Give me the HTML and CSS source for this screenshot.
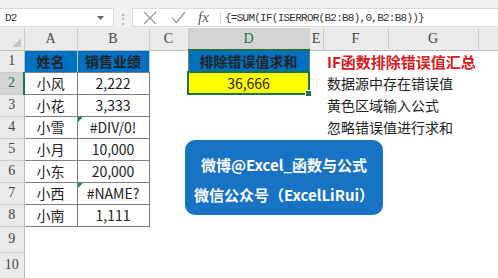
FILE: index.html
```html
<!DOCTYPE html>
<html lang="zh-CN">
<head>
    <meta charset="UTF-8">
    <title>IF函数排除错误值汇总</title>
    <link rel="stylesheet" href="styles.css">
</head>
<body>

    <div class="toolbar">
        <div class="name-box">
            <span>D2</span>
            <svg class="drop" width="7" height="4" viewBox="0 0 7 4"><path d="M0 0h7L3.5 4z" fill="#666"/></svg>
        </div>
        <div class="dots">⋮</div>
        <div class="formula-bar">
            <svg class="icon" width="14" height="14" viewBox="0 0 14 14"><path d="M1 1l12 12M13 1L1 13" stroke="#9a9a9a" stroke-width="1.3" fill="none"/></svg>
            <svg class="icon" width="15" height="13" viewBox="0 0 15 13"><path d="M1 7l4.5 4.5L14 1" stroke="#9a9a9a" stroke-width="1.3" fill="none"/></svg>
            <span class="fx">fx</span>
            <span class="formula">{=SUM(IF(ISERROR(B2:B8),0,B2:B8))}</span>
        </div>
    </div>

    <table class="sheet">
        <colgroup>
            <col class="c-row">
            <col class="c-a">
            <col class="c-b">
            <col class="c-c">
            <col class="c-d">
            <col class="c-e">
            <col class="c-f">
            <col class="c-g">
            <col class="c-h">
        </colgroup>
        <tr class="col-heads">
            <th class="corner"><span class="corner-tri"></span></th>
            <th>A</th><th>B</th><th>C</th><th class="sel">D</th><th>E</th><th>F</th><th>G</th><th></th>
        </tr>
        <tr>
            <th class="rh">1</th>
            <td class="head">姓名</td><td class="head">销售业绩</td><td></td>
            <td class="head sum-head">排除错误值求和</td><td></td>
            <td class="note title">IF函数排除错误值汇总</td><td></td><td></td>
        </tr>
        <tr>
            <th class="rh sel">2</th>
            <td class="cell">小风</td><td class="cell">2,222</td><td></td>
            <td class="result">36,666<span class="handle"></span></td><td></td>
            <td class="note">数据源中存在错误值</td><td></td><td></td>
        </tr>
        <tr>
            <th class="rh">3</th>
            <td class="cell">小花</td><td class="cell">3,333</td><td></td><td></td><td></td>
            <td class="note">黄色区域输入公式</td><td></td><td></td>
        </tr>
        <tr>
            <th class="rh">4</th>
            <td class="cell">小雪</td><td class="cell err">#DIV/0!</td><td></td><td></td><td></td>
            <td class="note">忽略错误值进行求和</td><td></td><td></td>
        </tr>
        <tr>
            <th class="rh">5</th>
            <td class="cell">小月</td><td class="cell">10,000</td><td></td><td></td><td></td><td></td><td></td><td></td>
        </tr>
        <tr>
            <th class="rh">6</th>
            <td class="cell">小东</td><td class="cell">20,000</td><td></td><td></td><td></td><td></td><td></td><td></td>
        </tr>
        <tr>
            <th class="rh">7</th>
            <td class="cell">小西</td><td class="cell err">#NAME?</td><td></td><td></td><td></td><td></td><td></td><td></td>
        </tr>
        <tr>
            <th class="rh">8</th>
            <td class="cell">小南</td><td class="cell">1,111</td><td></td><td></td><td></td><td></td><td></td><td></td>
        </tr>
        <tr class="tall">
            <th class="rh">9</th>
            <td></td><td></td><td></td><td></td><td></td><td></td><td></td><td></td>
        </tr>
        <tr class="tall">
            <th class="rh">10</th>
            <td></td><td></td><td></td><td></td><td></td><td></td><td></td><td></td>
        </tr>
    </table>

    <div class="banner">
        <p>微博@Excel_函数与公式</p>
        <p>微信公众号（ExcelLiRui）</p>
    </div>

</body>
</html>
```

FILE: styles.css
```css
body {
    margin: 0;
    width: 498px;
    height: 278px;
    overflow: hidden;
    background: white;
    font-family: "Noto Sans CJK SC", "Noto Sans", sans-serif;
    position: relative;
}

/* formula bar */
.toolbar {
    height: 28px;
    background-color: #f1f1f1;
    display: flex;
    align-items: flex-end;
    padding-bottom: 1px;
    box-sizing: border-box;
}

.name-box {
    width: 114px;
    height: 19px;
    background: white;
    border: 1px solid #dadada;
    border-left: none;
    box-sizing: border-box;
    display: flex;
    align-items: center;
    justify-content: space-between;
    padding: 0 9px 0 5px;
    font-family: "Liberation Mono", monospace;
    font-size: 11px;
    letter-spacing: -0.8px;
    color: #333;
}

.dots {
    width: 18px;
    text-align: center;
    color: #999;
    font-size: 12px;
    line-height: 19px;
}

.formula-bar {
    flex: 1;
    height: 19px;
    background: white;
    border: 1px solid #dadada;
    border-right: none;
    box-sizing: border-box;
    display: flex;
    align-items: center;
    padding-left: 10px;
    gap: 14px;
}

.fx {
    font-family: "Liberation Serif", serif;
    font-style: italic;
    font-size: 15px;
    color: #555;
    width: 14px;
    margin-left: -2px;
}

.formula {
    border-left: 1px solid #dadada;
    padding-left: 4px;
    margin-left: -6px;
    font-family: "Liberation Mono", monospace;
    font-size: 11px;
    letter-spacing: -0.75px;
    color: #333;
}

/* grid */
.sheet {
    border-collapse: collapse;
    table-layout: fixed;
    width: 520px;
}

.c-row { width: 24px; }
.c-a { width: 53px; }
.c-b { width: 72px; }
.c-c { width: 39px; }
.c-d { width: 121px; }
.c-e { width: 14px; }
.c-f { width: 65px; }
.c-g { width: 90px; }
.c-h { width: 42px; }

.sheet tr {
    height: 22px;
}

.sheet tr.tall {
    height: 26px;
}

.sheet td {
    padding: 0;
    white-space: nowrap;
    font-size: 14px;
    color: #222;
}

.col-heads th {
    background-color: #ebebeb;
    border-right: 1px solid #cdcdcd;
    border-bottom: 1px solid #bdbdbd;
    font-family: "Liberation Serif", serif;
    font-weight: normal;
    font-size: 14px;
    color: #444;
    padding: 0;
}

.col-heads th.sel {
    background-color: #d4d4d4;
    color: #217346;
    border-bottom: 2px solid #217346;
}

.corner {
    position: relative;
}

.corner-tri {
    position: absolute;
    right: 3px;
    bottom: 3px;
    border-left: 9px solid transparent;
    border-bottom: 9px solid #c5c5c5;
}

.rh {
    background-color: #ebebeb;
    border-right: 1px solid #bdbdbd;
    border-bottom: 1px solid #cdcdcd;
    font-family: "Liberation Serif", serif;
    font-weight: normal;
    font-size: 14px;
    color: #444;
    padding: 0;
}

.rh.sel {
    background-color: #d4d4d4;
    color: #217346;
    border-right: 2px solid #217346;
}

.head {
    background-color: #0070c0;
    color: white;
    font-weight: bold;
    font-size: 15px;
    text-align: center;
    border: 1px solid #7f7f7f;
    border-right-color: #c9c9c9;
}

.sum-head {
    border-right-color: #7f7f7f;
}

.cell {
    text-align: center;
    border: 1px solid #7f7f7f;
    position: relative;
}

.err::before {
    content: "";
    position: absolute;
    left: 0;
    top: 0;
    border-top: 5px solid #1f8a3c;
    border-right: 5px solid transparent;
}

.result {
    background-color: #ffff00;
    border: 2px solid #217346;
    text-align: center;
    font-size: 14.5px;
    position: relative;
}

.handle {
    position: absolute;
    right: -4px;
    bottom: -4px;
    width: 5px;
    height: 5px;
    background: #217346;
    border: 1px solid white;
}

.note {
    font-size: 13.3px;
    padding-left: 4px !important;
    overflow: visible;
}

.note.title {
    color: #d42020;
    font-weight: bold;
    font-size: 15px;
}

/* floating text box */
.banner {
    position: absolute;
    left: 185px;
    top: 140px;
    width: 198px;
    height: 75px;
    padding-top: 4px;
    box-sizing: border-box;
    background-color: #1873c4;
    border-radius: 10px;
    color: white;
    font-weight: bold;
    font-size: 15px;
    display: flex;
    flex-direction: column;
    justify-content: center;
    align-items: center;
    gap: 8px;
}

.banner p {
    margin: 0;
    line-height: 22px;
}
```
